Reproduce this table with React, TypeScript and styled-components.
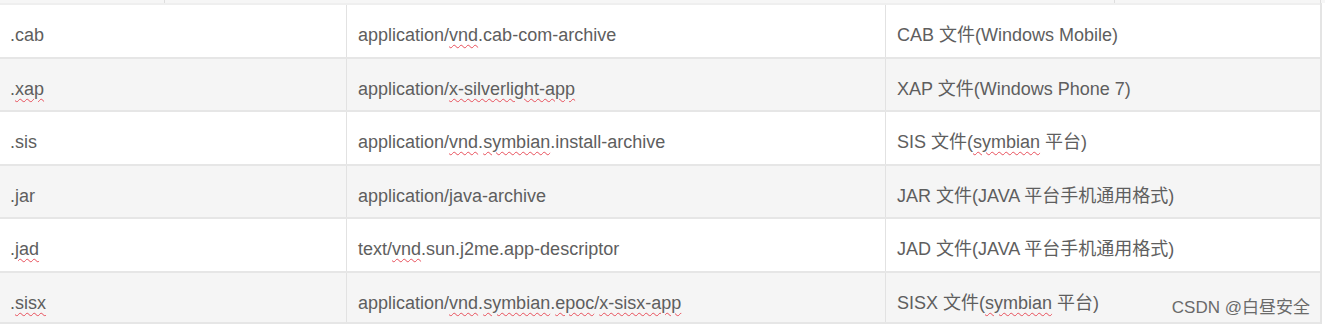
import styled, { createGlobalStyle } from "styled-components";

const GlobalStyle = createGlobalStyle`
  html, body {
    margin: 0;
    padding: 0;
    background: #ffffff;
  }
  body {
    font-family: "Liberation Sans", Arial, "Noto Sans CJK SC", sans-serif;
  }
`;

const Page = styled.div`
  position: relative;
  width: 1325px;
  height: 325px;
  overflow: hidden;
  background: #ffffff;
`;

const TopStrip = styled.div`
  display: grid;
  grid-template-columns: 165px 950px 206px;
  height: 3px;
  background: #f6f6f6;
`;

const StripCell = styled.div`
  border-right: 1px solid #dedede;
`;

const Table = styled.div`
  width: 1322px;
  border-right: 2px solid #e4e4e4;
  box-sizing: border-box;
`;

const TableRow = styled.div<{ $striped: boolean }>`
  display: grid;
  grid-template-columns: 346px 539px 1fr;
  height: 53.5px;
  box-sizing: border-box;
  border-top: 2px solid #e6e6e6;
  background: ${(p) => (p.$striped ? "#f5f5f5" : "#ffffff")};

  &:first-child {
    border-top-color: #efefef;
  }
  &:last-child {
    border-bottom: 2px solid #e6e6e6;
  }
`;

const Cell = styled.div`
  padding: 18px 0 0 11px;
  font-size: 18px;
  line-height: 24px;
  color: #5e5e5e;
  white-space: pre;
  border-left: 1px solid #e2e2e2;

  &:first-child {
    border-left: none;
    padding-left: 10px;
  }
`;

const Typo = styled.span`
  text-decoration: underline wavy #e8505b;
  text-decoration-thickness: 1px;
  text-underline-offset: 3px;
`;

const Watermark = styled.div`
  position: absolute;
  right: 15px;
  bottom: 7px;
  font-size: 17px;
  color: #6a6a6a;
  font-family: "Liberation Sans", Arial, "Noto Sans CJK SC", sans-serif;
`;

interface Row {
  ext: string;
  mime: React.ReactNode;
  desc: React.ReactNode;
}

const rows: Row[] = [
  {
    ext: ".cab",
    mime: (
      <>
        application/<Typo>vnd</Typo>.cab-com-archive
      </>
    ),
    desc: "CAB 文件(Windows Mobile)",
  },
  {
    ext: ".xap",
    mime: (
      <>
        application/<Typo>x-silverlight-app</Typo>
      </>
    ),
    desc: "XAP 文件(Windows Phone 7)",
  },
  {
    ext: ".sis",
    mime: (
      <>
        application/<Typo>vnd</Typo>.<Typo>symbian</Typo>.install-archive
      </>
    ),
    desc: (
      <>
        SIS 文件(<Typo>symbian</Typo>{" 平台)"}
      </>
    ),
  },
  {
    ext: ".jar",
    mime: "application/java-archive",
    desc: "JAR 文件(JAVA 平台手机通用格式)",
  },
  {
    ext: ".jad",
    mime: (
      <>
        text/<Typo>vnd</Typo>.sun.j2me.app-descriptor
      </>
    ),
    desc: "JAD 文件(JAVA 平台手机通用格式)",
  },
  {
    ext: ".sisx",
    mime: (
      <>
        application/<Typo>vnd</Typo>.<Typo>symbian</Typo>.<Typo>epoc</Typo>/<Typo>x-sisx-app</Typo>
      </>
    ),
    desc: (
      <>
        SISX 文件(<Typo>symbian</Typo>{" 平台)"}
      </>
    ),
  },
];

const underlined = (ext: string) => ext === ".xap" || ext === ".jad" || ext === ".sisx";

const App = () => {
  return (
    <Page>
      <GlobalStyle />
      <TopStrip>
        <StripCell />
        <StripCell />
        <StripCell />
      </TopStrip>
      <Table>
        {rows.map((row, i) => (
          <TableRow key={row.ext} $striped={i % 2 === 1}>
            <Cell>
              .{underlined(row.ext) ? <Typo>{row.ext.slice(1)}</Typo> : row.ext.slice(1)}
            </Cell>
            <Cell>{row.mime}</Cell>
            <Cell>{row.desc}</Cell>
          </TableRow>
        ))}
      </Table>
      <Watermark>CSDN @白昼安全</Watermark>
    </Page>
  );
};

export default App;
